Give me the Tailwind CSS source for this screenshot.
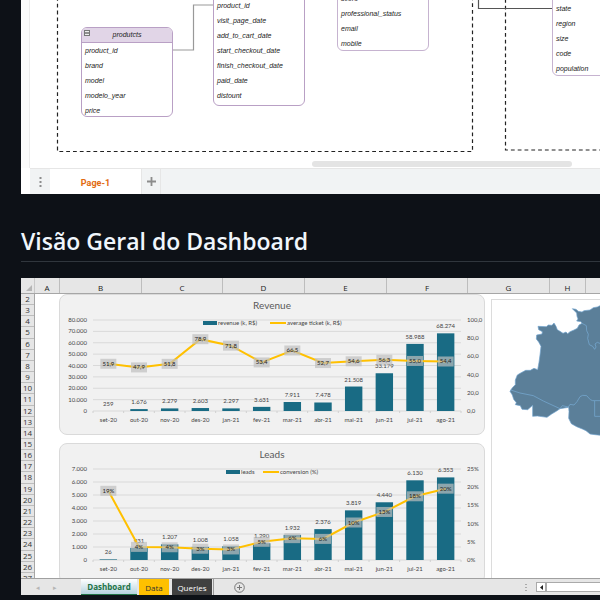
<!DOCTYPE html>
<html lang="pt-BR">
<head>
<meta charset="utf-8">
<meta name="viewport" content="width=device-width, initial-scale=1">
<title>Visão Geral do Dashboard</title>
<script src="https://cdn.jsdelivr.net/npm/@tailwindcss/browser@4"></script>
</head>
<body class="min-h-screen overflow-x-hidden bg-[#0d1117] font-['Open_Sans','Noto_Sans',sans-serif]">
<main class="pl-[21px]">

  <!-- Data model diagram -->
  <section class="overflow-hidden bg-white font-['Liberation_Sans',sans-serif]" aria-label="Modelo de dados">
    <div class="flex">
      <div class="w-[9px] shrink-0 border-r border-[#ebebeb] bg-[#fbfbfb]"></div>
      <div class="relative h-[168px] flex-1 overflow-hidden text-[7px] leading-[15px] text-[#222] italic">
        <svg class="absolute top-0 left-0 h-[168px] w-[640px]" viewBox="30 0 640 168" fill="none" aria-hidden="true">
          <path d="M57.5 -3V151.5H472.5V-3" stroke="#222" stroke-width="1.2" stroke-dasharray="3.8 3"/>
          <path d="M505.5 -1V150H680" stroke="#222" stroke-width="1.2" stroke-dasharray="3.8 3"/>
          <path d="M172 50H193.5V5H214" stroke="#999" stroke-width="1.2"/>
          <path d="M478.5 0V8.500H552" stroke="#555" stroke-width="1.2"/>
        </svg>
        <div class="absolute top-[27px] left-[51px] w-[92px] overflow-hidden rounded-[6px] border border-[#b9a0c5] bg-white">
          <div class="relative border-b border-[#b9a0c5] bg-[#e1d5e7] text-center leading-[14px]">produtcts
            <svg class="absolute top-[2px] left-[2px] size-[6px]" viewBox="0 0 6 6" fill="none" stroke="#777" aria-hidden="true"><rect x=".5" y=".5" width="5" height="5" fill="#eee"/><path d="M1 3H5" stroke="#333"/></svg>
          </div>
          <ul class="pl-[3px]"><li>product_id</li><li>brand</li><li>model</li><li>modelo_year</li><li class="-mb-[2px]">price</li></ul>
        </div>
        <ul class="absolute -top-[18px] left-[183px] w-[92px] rounded-[6px] border border-[#b9a0c5] bg-white pt-[15px] pb-[2px] pl-[3px]">
          <li>product_id</li><li>visit_page_date</li><li>add_to_cart_date</li><li>start_checkout_date</li><li>finish_checkout_date</li><li>paid_date</li><li>distount</li>
        </ul>
        <ul class="absolute -top-[25px] left-[307px] w-[92px] rounded-[6px] border border-[#c6b3d0] bg-white pt-[15px] pl-[3px]">
          <li>score</li><li>professional_status</li><li>email</li><li class="-mb-px">mobile</li>
        </ul>
        <ul class="absolute -top-[15px] left-[522px] w-[92px] rounded-[6px] border border-[#c6b3d0] bg-white pt-[15px] pl-[3px]">
          <li>state</li><li>region</li><li>size</li><li>code</li><li class="-mb-px">population</li>
        </ul>
        <div class="absolute top-[161px] left-[282px] h-[6px] w-[260px] rounded-full bg-[#e4e4e4]"></div>
      </div>
    </div>
    <div class="flex h-[26px] pl-[9px]">
      <div class="flex flex-1 items-stretch border-t border-[#e6e6e6] bg-[#f1f3f4]">
        <button class="flex w-[20px] items-center justify-center" aria-label="Páginas">
          <svg class="h-[10px] w-[3px]" viewBox="0 0 3 10" fill="#8c8c8c"><rect x=".5" y="0" width="2" height="2"/><rect x=".5" y="4" width="2" height="2"/><rect x=".5" y="8" width="2" height="2"/></svg>
        </button>
        <button class="w-[91px] bg-white pt-[5px] font-['Roboto',sans-serif] text-[9px] font-bold text-[#e26a10]">Page-1</button>
        <button class="flex w-[20px] items-center justify-center border-x border-[#e6e6e6]" aria-label="Adicionar página">
          <svg class="size-[9px]" viewBox="0 0 9 9" stroke="#8c8c8c" stroke-width="1.800"><path d="M0 4.500H9M4.500 0V9"/></svg>
        </button>
      </div>
    </div>
  </section>

  <h2 class="mt-8 mb-4 border-b border-[#30363d] pb-[5px] text-[23px] leading-[30px] font-semibold text-[#f0f6fc]">Visão Geral do Dashboard</h2>

  <!-- Spreadsheet -->
  <section class="overflow-hidden bg-white text-[8px] text-[#444]" aria-label="Dashboard">
    <div class="flex h-4 border-b border-[#a6a6a6] bg-[#e6e6e6] text-center leading-[20px] text-[#222]">
      <div class="flex w-[14px] shrink-0 items-end justify-end border-r border-[#c8c8c8] p-[2px]"><svg class="size-[6px]" viewBox="0 0 6 6" fill="#b5b5b5" aria-hidden="true"><path d="M6 0V6H0Z"/></svg></div>
      <div class="w-[25px] shrink-0 border-r border-[#bdbdbd]">A</div>
      <div class="w-[82px] shrink-0 border-r border-[#bdbdbd]">B</div>
      <div class="w-[81px] shrink-0 border-r border-[#bdbdbd]">C</div>
      <div class="w-[82px] shrink-0 border-r border-[#bdbdbd]">D</div>
      <div class="w-[82px] shrink-0 border-r border-[#bdbdbd]">E</div>
      <div class="w-[81px] shrink-0 border-r border-[#bdbdbd]">F</div>
      <div class="w-[82px] shrink-0 border-r border-[#bdbdbd]">G</div>
      <div class="w-[36px] shrink-0 border-r border-[#bdbdbd]">H</div>
    </div>
    <div class="flex h-[284px] overflow-hidden">
      <div id="rows" class="grid h-[290px] w-[14px] shrink-0 auto-rows-fr border-r border-[#a6a6a6] bg-[#e6e6e6] text-center leading-[10px] text-[#333]"></div>
      <div class="ml-6 flex w-[426px] shrink-0 flex-col gap-2 font-['Lato',sans-serif]">
        <figure class="h-[141px] shrink-0 rounded-[8px] border border-[#dadada] bg-[#f1f1f1]"><svg id="revenue" class="-m-px block h-[141px] w-[426px]" viewBox="0 0 426 141" role="img" aria-label="Revenue"></svg></figure>
        <figure class="h-[141px] shrink-0 rounded-[8px] border border-[#dadada] bg-[#f1f1f1]"><svg id="leads" class="-m-px block h-[141px] w-[426px]" viewBox="0 0 426 141" role="img" aria-label="Leads"></svg></figure>
      </div>
      <div class="mt-[5px] ml-[6px] flex-1 overflow-hidden border-t border-l border-[#dcdcdc]">
        <svg class="h-[140px] w-[108px]" viewBox="36 75 324 420" stroke-linejoin="round" role="img" aria-label="Mapa">
          <path fill="#5b7f99" stroke="#6fa3cf" stroke-width="2" d="M364 90L352 96 340 98 330 105 312 107 306 111 295 109 288 103 277 101 283 107 290 114 291 124 294 132 290 138 303 140 306 145 297 150 292 160 282 165 270 170 263 176 258 171 249 175 240 169 232 164 228 154 222 144 216 151 205 150 199 155 174 154 176 164 187 170 186 177 170 180 169 192 176 201 183 214 180 240 177 262 173 284 162 280 151 286 137 286 122 294 112 300 106 315 106 329 97 338 90 349 97 360 101 373 109 383 106 389 121 392 126 403 143 404 158 391 158 424 172 423 201 427 215 417 230 408 240 401 266 397 267 410 266 430 274 446 290 455 307 462 318 467 330 477 345 479 364 481Z"/>
          <path fill="none" stroke="#79add8" stroke-width="2" d="M92 345L120 354 160 362 190 378 240 401 247 392 265 396 270 388 282 390 291 380 300 365 308 361 320 362 331 374 338 377H364M344 378V424H364M306 145L319 152 320 167 325 178 323 190 328 209 338 214 344 223 348 216 345 207 352 202 364 207"/>
        </svg>
      </div>
    </div>
    <div class="flex h-[17px] items-stretch border-t border-[#a0a0a0] bg-[#e6e6e6] leading-[15px]">
      <button class="w-[34px] text-[7px] text-[#b5b5b5]" aria-label="Planilha anterior">◂</button>
      <button class="mr-[26px] -ml-[2px] text-[7px] text-[#b5b5b5]" aria-label="Próxima planilha">▸</button>
      <button class="-ml-[2px] w-[56px] shrink-0 border-b border-[#217346] bg-linear-to-b from-white to-[#b5d3df] font-bold text-[#217346]">Dashboard</button>
      <button class="ml-[2px] w-[30px] shrink-0 bg-[#ffc000] text-[#333]">Data</button>
      <button class="ml-[3px] w-[40px] shrink-0 bg-[#404040] text-white">Queries</button>
      <div class="ml-px w-px bg-[#999]"></div>
      <button class="ml-5 flex items-center" aria-label="Nova planilha">
        <svg class="size-[11px]" viewBox="0 0 11 11" fill="none" stroke="#777"><circle cx="5.500" cy="5.500" r="4.800"/><path d="M3 5.500H8M5.500 3V8"/></svg>
      </button>
      <div class="ml-auto flex items-center gap-[9px]">
        <svg class="h-[7px] w-[2px]" viewBox="0 0 2 7" fill="#aaa" aria-hidden="true"><path d="M0 0h2v1H0zM0 3h2v1H0zM0 6h2v1H0z"/></svg>
        <div class="flex h-[10px]">
          <button class="flex w-[10px] items-center justify-center border border-[#aaa] bg-white" aria-label="Rolar para a esquerda"><svg class="h-[5px] w-[3px]" viewBox="0 0 3 5" fill="#222"><path d="M3 0V5L0 2.500Z"/></svg></button>
          <div class="w-[54px] border-y border-l border-[#aaa] bg-white"></div>
        </div>
      </div>
    </div>
  </section>
</main>

<script>
  const rows = document.getElementById('rows');
  for (let n = 2; n <= 27; n++) {
    const cell = document.createElement('div');
    cell.className = 'border-b border-[#bdbdbd]';
    cell.textContent = n;
    rows.append(cell);
  }

  const MONTHS = ['set-20','out-20','nov-20','des-20','jan-21','fev-21','mar-21','abr-21','mai-21','jun-21','jul-21','ago-21'];
  const LEFT = 34, RIGHT = 402, TOP = 26, BASE = 117, STEP = (RIGHT - LEFT) / 12;
  const thousands = v => String(v).replace(/\B(?=(\d{3})+$)/g, '.');

  function drawChart(id, c) {
    const height = BASE - TOP;
    let s = '';
    const text = (x, y, t, anchor = 'middle', size = 6, fill = '#444') => {
      s += `<text x="${x}" y="${y}" text-anchor="${anchor}" font-size="${size}" fill="${fill}">${t}</text>`;
    };
    for (let v = 0; v <= c.max; v += c.tick) {
      const y = BASE - v / c.max * height;
      s += `<path d="M${LEFT} ${y}H${RIGHT}" stroke="#d9d9d9"/>`;
      text(28, y + 2, thousands(v), 'end');
    }
    for (let i = 0; i <= 12; i++) s += `<path d="M${LEFT + i * STEP} ${BASE}v2" stroke="#d0d0d0"/>`;
    c.axis.forEach((t, i) => text(408, BASE + 2 - i * height / (c.axis.length - 1), t, 'start'));
    const cx = i => LEFT + STEP * (i + .5);
    c.bars.forEach((v, i) => {
      const h = Math.max(v / c.max * height, i || c.max < 10000 ? .6 : 0);
      s += `<rect x="${cx(i) - 8.7}" y="${BASE - h}" width="17.400" height="${v < 300 && c.max > 10000 ? 0 : h}" fill="#196b84"/>`;
      text(cx(i), BASE - h - 5, thousands(v));
      text(cx(i), BASE + 11, MONTHS[i]);
    });
    const ly = v => BASE - v / c.lineMax * height;
    s += `<polyline points="${c.line.map((v, i) => cx(i) + ',' + ly(v)).join(' ')}" fill="none" stroke="#ffc000" stroke-width="2"/>`;
    c.line.forEach((v, i) => {
      s += `<rect x="${cx(i) - 8}" y="${ly(v) - 5}" width="16" height="10" fill="#bfbfbf" fill-opacity=".7"/>`;
      text(cx(i), ly(v) + 2, c.labels[i], 'middle', 6, '#222');
    });
    text(213, 15, c.title, 'middle', 10, '#595959');
    const [b, l] = c.legend;
    s += `<rect x="${b}" y="27" width="14" height="4" fill="#196b84"/><path d="M${l} 29h16" stroke="#ffc000" stroke-width="2"/>`;
    text(b + 15, 31, c.names[0], 'start');
    text(l + 17, 31, c.names[1], 'start');
    document.getElementById(id).innerHTML = s;
  }

  drawChart('revenue', {
    title: 'Revenue', names: ['revenue (k, R$)', 'average ticket (k, R$)'], legend: [144, 211],
    max: 80000, tick: 10000, lineMax: 100, axis: ['0,0','20,0','40,0','60,0','80,0','100,0'],
    bars: [259,1676,2279,2603,2297,3631,7911,7478,21508,33179,58988,68274],
    line: [51.9,47.9,51.8,78.9,71.8,53.4,66.5,52.7,54.6,56.3,55,54.4],
    labels: ['51,9','47,9','51,8','78,9','71,8','53,4','66,5','52,7','54,6','56,3','55,0','54,4']
  });
  drawChart('leads', {
    title: 'Leads', names: ['leads', 'conversion (%)'], legend: [167, 204],
    max: 7000, tick: 1000, lineMax: 25, axis: ['0%','5%','10%','15%','20%','25%'],
    bars: [26,931,1207,1008,1058,1290,1932,2376,3819,4440,6130,6353],
    line: [19,3.6,3.5,3.1,2.9,5,6,5.8,10.3,13.2,17.5,19.6],
    labels: ['19%','4%','4%','3%','3%','5%','6%','6%','10%','13%','18%','20%']
  });
</script>
</body>
</html>
